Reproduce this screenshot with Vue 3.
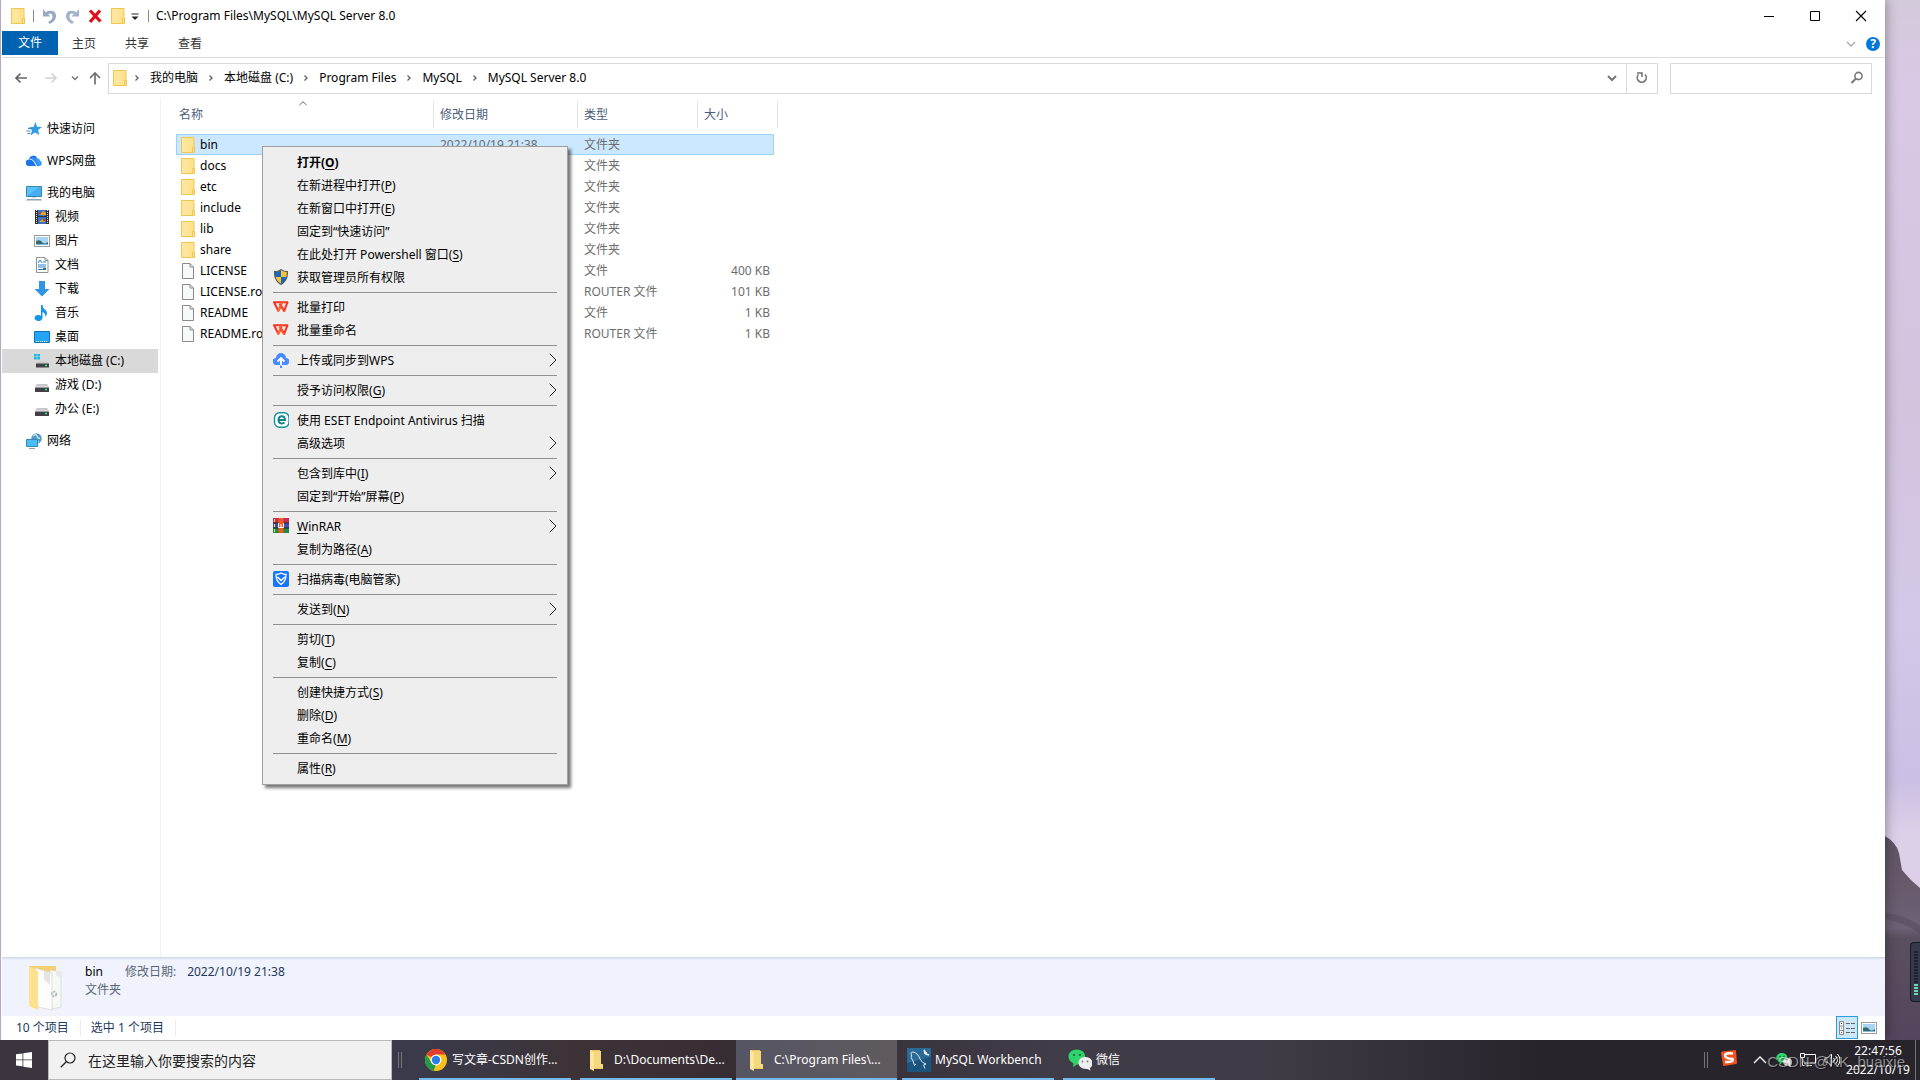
<script setup>
import { ref } from 'vue'

const folder = '<path d="M1.500 .5h12.500v15h-12.500z" fill="#ffe391" stroke="#eec650"/><path d="M2 1h6v14H2z" fill="#fff" opacity=".12"/><path d="M12.500 10.500h2v5h-2z" fill="#ffe391" stroke="#eec650"/>'
const page = '<path d="M2.500 .5h7.500l3.500 3.500v11.500h-11z" fill="#f8f9f9" stroke="#8a8a8a"/><path d="M10 .5V4h3.500" fill="none" stroke="#8a8a8a"/>'
const disk = '<path d="M3 7h10l2 3H1z" fill="#c7c9cc"/><rect x="1" y="10" width="14" height="5" rx=".5" fill="#3f4245"/><path d="M1 10h14" stroke="#eee"/><path d="M11 12.500h2" stroke="#52e07a" stroke-width="1.500"/>'
const picture = '<rect x=".5" y="2.500" width="15" height="11" fill="#fff" stroke="#9b9b9b"/><path d="M2 4h12v8H2z" fill="#a8d3f1"/><path d="M2 8q4-2 6 1t6 0v3H2z" fill="#356b68"/><path d="M2 11h12v1H2z" fill="#7fb8d8"/>'
const wps = '<path d="M1 3.200h13.500l-3.300 8.600-3-4.800-2.900 4.800z" fill="none" stroke="#f9302a" stroke-width="2" stroke-linejoin="round"/><path d="M5.300 11.800L9.200 3.200" stroke="#ff6a2b" stroke-width="2.200" stroke-linecap="round"/><path d="M7 5.500l4.200 6.300" stroke="#fb4a26" stroke-width="2.200" stroke-linecap="round"/>'

const icons = {
  folder,
  page,
  disk,
  picture,
  wps,
  star: '<path d="M9.500 1l1.500 4.800 5 .1-3.900 3.200 1.100 5-4.200-2.700-4.400 2.900 1.500-5-3.300-3 4.700-.4z" fill="#2f9be3"/><path d="M2 7.500h4M.5 10h4M1.500 12.500h3" stroke="#2f7fc3" stroke-width=".9"/>',
  cloud: '<path d="M3 6a4.500 4.500 0 0 1 7.500-2l3 8H5z" fill="#156bda"/><path d="M9 5.500a3.500 3.500 0 0 1 5 2A3 3 0 0 1 14 13h-2z" fill="#3b9bff"/><path d="M5 3q4 1 5 4l3 6H8z" fill="#2f8dfa"/><path d="M3.500 6.500q4 0 7 6.500H2.500a3 3 0 0 1 1-6.500z" fill="#1a76e8"/><path d="M3.500 6q4 0 7 7" fill="none" stroke="#fff" stroke-width="1"/>',
  pc: '<path d="M.5 1.500h15v10H.5z" fill="#5cc3f7" stroke="#3985ac"/><path d="M1 11L13 2h2v9z" fill="#46aef0"/><path d="M6 12h4v1H6z" fill="#ccd"/><path d="M1 14h14l1 1.500H0z" fill="#8ba4b5"/>',
  video: '<path d="M1 1h14v14H1z" fill="#303030"/><path d="M2.500 1v14M13.500 1v14" stroke="#ddd" stroke-dasharray="1 1"/><path d="M4 1h8v6H4zM4 8h8v7H4z" fill="#3c72c4"/><path d="M6 5l3-3 3 2v2H7zM5 13l4-3 2 3z" fill="#e9a328"/><path d="M5 3h2v2H5zM9 10h2v2H9z" fill="#c73827"/>',
  text: '<path d="M2.500 .5h8.500l3 3v12h-11.500z" fill="#fff" stroke="#929292"/><path d="M11 .5v3h3" fill="none" stroke="#929292"/><path d="M4 6l2-3 2 3M9 5h3M4 8h8M4 10h8M4 12.500h5" stroke="#2682c6" fill="none"/><path d="M9 11h3v2H9z" fill="#3a7b78"/>',
  down: '<path d="M5 0h6v8h4.500L8 15.500.5 8H5z" fill="#3295e4"/>',
  music: '<path d="M7 0h1.500q0 3 3 5 3 3 0 7 0-4-3-5v6a4 3 0 1 1-1.500-2.300z" fill="#1594ec"/>',
  desktop: '<path d="M.5 2.500h15v11H.5z" fill="#22a5f8" stroke="#0b73bd"/><path d="M2 12.500h12" stroke="#fff" stroke-dasharray="1 1"/>',
  system: '<path d="M0 1h2.700v2.500H0zM3.300 1H6v2.500H3.300zM0 4h2.700v2.500H0zM3.300 4H6v2.500H3.300z" fill="#18b5ee"/><path d="M4 8.500h9l2 2H2z" fill="#c7c9cc"/><rect x="2" y="10.500" width="13" height="4" fill="#3f4245"/><path d="M11 12.500h2" stroke="#52e07a" stroke-width="1.500"/>',
  network: '<circle cx="10.500" cy="5.500" r="5.200" fill="#5399be"/><path d="M7 3q3-3 4 0t3 2M9 8l4 1" fill="none" stroke="#bfe1ee" stroke-width="1.500"/><path d="M.5 6.500h11v7H.5z" fill="#4cbcf5" stroke="#3288b7"/><path d="M3 15.500h6" stroke="#8ba4b5"/>',
  shield: '<path d="M8 .6q3 2 6.400 2 .5 9-6.400 12.800Q1 11.500 1.600 2.600q3.400 0 6.400-2z" fill="#f7c237"/><path d="M8 1v7H2V3q3 0 6-2zM8 8h6q-1 4.500-6 7z" fill="#1769bf"/><path d="M8 .6q3 2 6.400 2 .5 9-6.400 12.800Q1 11.500 1.600 2.600q3.400 0 6.400-2z" fill="none" stroke="#4c5560" stroke-width="1.100"/>',
  upload: '<path d="M3.500 13a3.500 3.500 0 0 1-.5-7 5 5 0 0 1 10 0 3.500 3.500 0 0 1-.5 7z" fill="#478bff"/><path d="M8 14V7M4.500 9.500L8 6l3.500 3.500" fill="none" stroke="#fff" stroke-width="1.800"/><path d="M7 13.500h2V16H7z" fill="#478bff"/>',
  eset: '<rect x="1.500" y=".7" width="14.500" height="14.500" rx="5" fill="#fff" stroke="#12939a" stroke-width="1.400"/><path d="M6 8h6c0-5-6.500-5-6.500 0 0 4 4 4 6 2.500" fill="none" stroke="#12838c" stroke-width="2"/>',
  rar: '<path d="M0 0h16v5H0z" fill="#c72c57"/><path d="M0 5h16v5H0z" fill="#444fa8"/><path d="M0 10h16v5H0z" fill="#228c42"/><path d="M0 5h16M0 10h16" stroke="#222"/><path d="M5.500 0h5v15h-5z" fill="#ee5b22"/><path d="M5.500 5v4.500h5V5M8 6v3" fill="none" stroke="#fff"/><path d="M1.500 1v3M1.500 6v3M1.500 11v3" stroke="#f7df47"/>',
  guard: '<rect width="16" height="16" rx="2" fill="#1476ff"/><path d="M8 2q2.500 1.500 5 1.500 0 7-5 10-5-3-5-10 2.500 0 5-1.500z" fill="none" stroke="#fff" stroke-width="1.300"/><path d="M4.500 6L8 9.500 12 6" fill="none" stroke="#fff" stroke-width="1.500"/>',
  undo: '<path d="M2 1v7.500h7.500L7 6q4.500-1.500 4.500 2.500 0 3-4.500 5.500l2 2q7-4 6-9-1-5.500-8.500-4L5 4.500z" fill="#98a9c6"/>',
  redo: '<path d="M15 1v7.500H7.500L10 6Q5.500 4.500 5.500 8.500q0 3 4.500 5.500l-2 2q-7-4-6-9 1-5.500 8.500-4L12 4.500z" fill="#a3b2cb"/>',
  cross: '<path d="M3 2.500l10.500 11M13 2.500L3 14" stroke="#df1018" stroke-width="3.200"/>',
  menu: '<path d="M4.500 6h7" stroke="#222"/><path d="M4.500 8.500h7L8 12z" fill="#222"/>',
  back: '<path d="M14 8H3M7.500 3.500L3 8l4.500 4.500" fill="none" stroke="#666" stroke-width="1.700"/>',
  forward: '<path d="M2 8h11M8.500 3.500L13 8l-4.500 4.500" fill="none" stroke="#d3d3d3" stroke-width="1.700"/>',
  up: '<path d="M8 14.500V3M3 8l5-5 5 5" fill="none" stroke="#707070" stroke-width="1.700"/>',
  chevron: '<path d="M5 6.500L8 9.500l3-3" fill="none" stroke="#777" stroke-width="1.500"/>',
  wide: '<path d="M4 6l4 4 4-4" fill="none" stroke="#777" stroke-width="2"/>',
  thin: '<path d="M4 6l4 4 4-4" fill="none" stroke="#aaa" stroke-width="1.300"/>',
  crumb: '<path d="M6.500 5.500L9 8l-2.500 2.500" fill="none" stroke="#666" stroke-width="1.400"/>',
  refresh: '<path d="M4.500 4.500a4.500 4.500 0 1 0 6.500 0" fill="none" stroke="#707070" stroke-width="1.600"/><path d="M3 3h5v4" fill="none" stroke="#707070" stroke-width="1.500"/>',
  search: '<circle cx="9.500" cy="6" r="3.600" fill="none" stroke="#777" stroke-width="1.600"/><path d="M7 8.500L2.500 13" stroke="#777" stroke-width="2"/>',
  min: '<path d="M3 8.500h10" stroke="#000"/>',
  max: '<path d="M3.500 3.500h9v9h-9z" fill="none" stroke="#000"/>',
  close: '<path d="M3 3l10 10M13 3L3 13" stroke="#000" stroke-width="1.100"/>',
}

const quick = ['undo', 'redo', 'cross', 'folder', 'menu']
const tabs = ['主页', '共享', '查看']
const crumbs = ['我的电脑', '本地磁盘 (C:)', 'Program Files', 'MySQL', 'MySQL Server 8.0']

const nav = [
  [{ icon: 'star', name: '快速访问' }],
  [{ icon: 'cloud', name: 'WPS网盘' }],
  [
    { icon: 'pc', name: '我的电脑' },
    { icon: 'video', name: '视频', child: true },
    { icon: 'picture', name: '图片', child: true },
    { icon: 'text', name: '文档', child: true },
    { icon: 'down', name: '下载', child: true },
    { icon: 'music', name: '音乐', child: true },
    { icon: 'desktop', name: '桌面', child: true },
    { icon: 'system', name: '本地磁盘 (C:)', child: true, current: true },
    { icon: 'disk', name: '游戏 (D:)', child: true },
    { icon: 'disk', name: '办公 (E:)', child: true },
  ],
  [{ icon: 'network', name: '网络' }],
]

const date = '2022/10/19 21:38'
const files = [
  ...['bin', 'docs', 'etc', 'include', 'lib', 'share'].map((name) => ({ name, icon: 'folder', type: '文件夹', size: '' })),
  { name: 'LICENSE', icon: 'page', type: '文件', size: '400 KB' },
  { name: 'LICENSE.router', icon: 'page', type: 'ROUTER 文件', size: '101 KB' },
  { name: 'README', icon: 'page', type: '文件', size: '1 KB' },
  { name: 'README.router', icon: 'page', type: 'ROUTER 文件', size: '1 KB' },
]
const selected = ref('bin')

const menu = [
  [
    { t: '打开', k: 'O', bold: true },
    { t: '在新进程中打开', k: 'P' },
    { t: '在新窗口中打开', k: 'E' },
    { t: '固定到“快速访问”' },
    { t: '在此处打开 Powershell 窗口', k: 'S' },
    { t: '获取管理员所有权限', icon: 'shield' },
  ],
  [
    { t: '批量打印', icon: 'wps' },
    { t: '批量重命名', icon: 'wps' },
  ],
  [{ t: '上传或同步到WPS', icon: 'upload', sub: true }],
  [{ t: '授予访问权限', k: 'G', sub: true }],
  [
    { t: '使用 ESET Endpoint Antivirus 扫描', icon: 'eset' },
    { t: '高级选项', sub: true },
  ],
  [
    { t: '包含到库中', k: 'I', sub: true },
    { t: '固定到“开始”屏幕', k: 'P' },
  ],
  [
    { lead: 'W', t: 'inRAR', icon: 'rar', sub: true },
    { t: '复制为路径', k: 'A' },
  ],
  [{ t: '扫描病毒(电脑管家)', icon: 'guard' }],
  [{ t: '发送到', k: 'N', sub: true }],
  [
    { t: '剪切', k: 'T' },
    { t: '复制', k: 'C' },
  ],
  [
    { t: '创建快捷方式', k: 'S' },
    { t: '删除', k: 'D' },
    { t: '重命名', k: 'M' },
  ],
  [{ t: '属性', k: 'R' }],
]
</script>

<template>
  <div class="desktop">
    <div class="workspace">
      <main class="window">
        <header class="titlebar">
          <svg class="ico" viewBox="0 0 16 16" v-html="icons.folder"></svg>
          <i class="bar"></i>
          <div class="quick">
            <button v-for="q in quick" :key="q" :class="q" :aria-label="q"><svg class="ico" viewBox="0 0 16 16" v-html="icons[q]"></svg></button>
          </div>
          <i class="bar"></i>
          <span class="title">C:\Program Files\MySQL\MySQL Server 8.0</span>
          <div class="winbtns">
            <button v-for="b in ['min', 'max', 'close']" :key="b" :aria-label="b"><svg class="ico" viewBox="0 0 16 16" v-html="icons[b]"></svg></button>
          </div>
        </header>

        <nav class="ribbon">
          <button class="file">文件</button>
          <button v-for="t in tabs" :key="t">{{ t }}</button>
          <div class="ribbon-end">
            <svg class="ico" viewBox="0 0 16 16" v-html="icons.thin"></svg>
            <button class="help" aria-label="帮助">?</button>
          </div>
        </nav>

        <div class="addressrow">
          <div class="arrows">
            <button aria-label="后退"><svg class="ico" viewBox="0 0 16 16" v-html="icons.back"></svg></button>
            <button aria-label="前进"><svg class="ico" viewBox="0 0 16 16" v-html="icons.forward"></svg></button>
            <button class="slim" aria-label="最近"><svg class="ico" viewBox="0 0 16 16" v-html="icons.chevron"></svg></button>
            <button class="slim" aria-label="上移"><svg class="ico" viewBox="0 0 16 16" v-html="icons.up"></svg></button>
          </div>
          <div class="address">
            <svg class="ico" viewBox="0 0 16 16" v-html="icons.folder"></svg>
            <template v-for="c in crumbs" :key="c">
              <svg class="sepchev" viewBox="0 0 16 16" v-html="icons.crumb"></svg>
              <button>{{ c }}</button>
            </template>
            <button class="drop" aria-label="历史"><svg class="ico" viewBox="0 0 16 16" v-html="icons.wide"></svg></button>
            <button class="refresh" aria-label="刷新"><svg class="ico" viewBox="0 0 16 16" v-html="icons.refresh"></svg></button>
          </div>
          <label class="search">
            <input type="text" aria-label="搜索" />
            <svg class="ico" viewBox="0 0 16 16" v-html="icons.search"></svg>
          </label>
        </div>

        <div class="content">
          <aside class="sidebar">
            <div v-for="(g, i) in nav" :key="i" class="group">
              <a v-for="n in g" :key="n.name" href="#" :class="{ child: n.child, current: n.current }">
                <svg class="ico" viewBox="0 0 16 16" v-html="icons[n.icon]"></svg>{{ n.name }}
              </a>
            </div>
          </aside>

          <section class="listing">
            <svg class="sort" viewBox="0 0 8 5"><path d="M.5 4L4 .7 7.500 4" fill="none" stroke="#666" /></svg>
            <table>
              <colgroup><col class="c-name" /><col class="c-date" /><col class="c-type" /><col class="c-size" /></colgroup>
              <thead>
                <tr>
                  <th v-for="h in ['名称', '修改日期', '类型', '大小']" :key="h" scope="col"><div>{{ h }}</div></th>
                </tr>
              </thead>
              <tbody>
                <tr v-for="f in files" :key="f.name" :class="{ selected: f.name === selected }" @click="selected = f.name">
                  <td class="name"><div><svg class="ico" viewBox="0 0 16 16" v-html="icons[f.icon]"></svg>{{ f.name }}</div></td>
                  <td>{{ date }}</td>
                  <td>{{ f.type }}</td>
                  <td class="size">{{ f.size }}</td>
                </tr>
              </tbody>
            </table>
          </section>
        </div>

        <section class="details">
          <svg class="bigfolder" viewBox="0 0 36 46">
            <path d="M1 1h27v38H1z" fill="#f3cf72" />
            <path d="M22 5l11 2v35l-9 2z" fill="#f7f7f6" stroke="#d5d5d5" stroke-width=".7" />
            <path d="M28 5v5l5 3V7z" fill="#e9e9e7" />
            <path d="M7 3l17 5v37L10 42z" fill="#fdfdfb" stroke="#d9d7d0" stroke-width=".7" />
            <path d="M16 6v8l6 6V8z" fill="#e4e4e2" />
            <circle cx="26" cy="29" r="2.300" fill="none" stroke="#aeb9c2" stroke-width="1.800" stroke-dasharray="2 1" />
            <path d="M1 1l9 5v39l-9-4z" fill="#ffe08e" />
          </svg>
          <div class="facts">
            <div><span class="fname">bin</span><span class="label">修改日期:</span><span>{{ date }}</span></div>
            <div class="label">文件夹</div>
          </div>
        </section>

        <footer class="status">
          <span>10 个项目</span>
          <span>选中 1 个项目</span>
          <div class="views">
            <button class="on" aria-label="详细信息">
              <svg viewBox="0 0 18 16"><path d="M1.500 1.500h4v13h-4zM1.500 6h4M1.500 10.500h4" fill="#fff" stroke="#8a8a8a" /><path d="M3 3.500h1" stroke="#333" /><path d="M3 8h1" stroke="#2b80c8" /><path d="M3 12.500h1" stroke="#c33" /><path d="M8 3.500h4M13 3.500h4M8 8.500h4M13 8.500h4M8 12.500h4M13 12.500h4" stroke="#666" /></svg>
            </button>
            <button class="large" aria-label="大图标"><svg class="ico" viewBox="0 0 16 16" v-html="icons.picture"></svg></button>
          </div>
        </footer>
      </main>

      <div class="wallpaper">
        <svg viewBox="0 0 35 220" preserveAspectRatio="none">
          <defs>
            <linearGradient id="rock" x1="0" y1="0" x2="0" y2="1">
              <stop offset="0" stop-color="#5f5464" />
              <stop offset=".45" stop-color="#6d6175" />
              <stop offset=".5" stop-color="#5a5060" />
              <stop offset="1" stop-color="#54455c" />
            </linearGradient>
          </defs>
          <path d="M0 16Q11 22 14 33l3 17q8 10 18 18v152H0z" fill="url(#rock)" />
          <path d="M0 93q18 1 35 13v8Q20 102 0 99z" fill="#4a4150" opacity=".35" />
        </svg>
        <div class="meter"><i></i></div>
      </div>
    </div>

    <div class="taskbar">
      <button class="start" aria-label="开始">
        <svg viewBox="0 0 16 16"><path d="M0 2.300l6.500-.9v6H0zM7.300 1.300L16 0v7.400H7.300zM0 8.300h6.500v6L0 13.500zM7.300 8.300H16V16l-8.700-1.300z" fill="#fff" /></svg>
      </button>
      <label class="tasksearch">
        <svg viewBox="0 0 16 16"><circle cx="10" cy="6" r="5" fill="none" stroke="#222" stroke-width="1.200" /><path d="M6.500 9.500L.8 15.200" stroke="#222" stroke-width="1.300" /></svg>
        <input type="text" placeholder="在这里输入你要搜索的内容" />
      </label>
      <i class="grip"></i>
      <div class="tasks">
        <button>
          <svg class="app" viewBox="0 0 24 24">
            <circle cx="12" cy="12" r="11" fill="#fbc116" />
            <path d="M12 12L2.500 6.500A11 11 0 0 1 21.500 6.500H12z" fill="#e33b2e" />
            <path d="M2.500 6.500L7.500 15l4.500 2-2.500 5.800A11 11 0 0 1 2.500 6.500z" fill="#229a4b" />
            <circle cx="12" cy="12" r="5.400" fill="#fff" /><circle cx="12" cy="12" r="4.200" fill="#2b7de9" />
          </svg>写文章-CSDN创作...
        </button>
        <button class="dir">
          <svg class="app" viewBox="0 0 24 24"><path d="M5 2h10v13l3 2v4H7z" fill="#edc860" /><path d="M5 2l4 2v19l-4-2z" fill="#ffe69b" /><path d="M9 3h7v13h2v4H9z" fill="#f5d77d" /></svg>D:\Documents\De...
        </button>
        <button class="dir active">
          <svg class="app" viewBox="0 0 24 24"><path d="M5 2h10v13l3 2v4H7z" fill="#edc860" /><path d="M5 2l4 2v19l-4-2z" fill="#ffe69b" /><path d="M9 3h7v13h2v4H9z" fill="#f5d77d" /></svg>C:\Program Files\...
        </button>
        <button>
          <svg class="app" viewBox="0 0 24 24"><rect width="24" height="24" rx="1" fill="#1c5480" /><path d="M0 0h24v9L0 15z" fill="#2a6b98" /><path d="M6 13q-3-4-1.500-6Q3 4 6 4q5 1 7 7 2 4 6 5l-2.500 1 1.500 3.500M6 13l1.500 4.500L9 16" fill="none" stroke="#dce8f1" /><path d="M17 2l2 4 3 1M20 5l-3 0" fill="none" stroke="#e9eef2" stroke-width="1.800" /></svg>MySQL Workbench
        </button>
        <button>
          <svg class="app" viewBox="0 0 24 24"><path d="M9 1.500c11 0 11 15 0 15l-4 2.500.5-3.500C-3 11 0 1.500 9 1.500z" fill="#2fd36b" /><circle cx="6" cy="7" r="1.100" fill="#17643a" /><circle cx="12" cy="7" r="1.100" fill="#17643a" /><path d="M17 9c9 0 9 9 5 11l.5 2.500-3-1.500C8 22 8 9 17 9z" fill="#eee" /><circle cx="14.500" cy="13.500" r=".9" fill="#777" /><circle cx="19.500" cy="13.500" r=".9" fill="#777" /></svg>微信
        </button>
      </div>
      <div class="tray">
        <i class="grip"></i>
        <svg class="sogou" viewBox="0 0 16 16"><path d="M1 1.500L14 0q1 0 1 1l1 12q0 1-1 1L3 16q-1 0-1-1L0 3q0-1 1-1.500z" fill="#f4511e" /><path d="M12 3.500Q4 2.500 4 5.500T11.500 9Q13 12.500 4 12" fill="none" stroke="#fff" stroke-width="2.400" /></svg>
        <svg viewBox="0 0 16 16"><path d="M2 11l6-6 6 6" fill="none" stroke="#fff" stroke-width="1.400" /></svg>
        <svg viewBox="0 0 24 24"><path d="M9 1.500c11 0 11 15 0 15l-4 2.500.5-3.500C-3 11 0 1.500 9 1.500z" fill="#2fd36b" /><path d="M17 9c9 0 9 9 5 11l.5 2.500-3-1.500C8 22 8 9 17 9z" fill="#eee" /><circle cx="6" cy="7" r="1.200" fill="#17643a" /><circle cx="12" cy="7" r="1.200" fill="#17643a" /></svg>
        <svg viewBox="0 0 16 16"><path d="M5 2.500h10.500v8.500H4M7 13.500h5M.5 1.500h4v4h-4zM2.500 5.500v8h2" fill="none" stroke="#fff" /></svg>
        <svg viewBox="0 0 16 16"><path d="M1 6h2.500L7.500 2v12l-4-4H1z" fill="none" stroke="#fff" /><path d="M9.500 6q2 2 0 4M11.500 4q4 4 0 8M13.500 2q5 6 0 12" fill="none" stroke="#fff" /></svg>
        <div class="clock"><span>22:47:56</span><span>2022/10/19</span></div>
      </div>
      <span class="watermark">CSDN @KK_buaixie</span>
    </div>

    <ul class="context" role="menu">
      <li v-for="(g, i) in menu" :key="i" role="none">
        <button v-for="m in g" :key="m.t" role="menuitem" :class="{ bold: m.bold }">
          <svg class="ico" viewBox="0 0 16 16" v-html="m.icon ? icons[m.icon] : ''"></svg>
          <span><u v-if="m.lead">{{ m.lead }}</u>{{ m.t }}<template v-if="m.k">(<u>{{ m.k }}</u>)</template></span>
          <svg v-if="m.sub" class="more" viewBox="0 0 8 14"><path d="M.7 .7L7 7 .7 13.300" fill="none" stroke="#222" /></svg>
        </button>
      </li>
    </ul>
  </div>
</template>

<style>
body {
  margin: 0;
}
</style>

<style scoped>
* {
  box-sizing: border-box;
}
.desktop {
  position: relative;
  display: flex;
  flex-direction: column;
  min-height: 100vh;
  overflow: hidden;
  font: 12px/16px "Noto Sans", "Noto Sans CJK SC", sans-serif;
  color: #000;
}
button,
input {
  border: 0;
  padding: 0;
  margin: 0;
  background: none;
  font: inherit;
  color: inherit;
}
button {
  display: flex;
  align-items: center;
  justify-content: center;
  white-space: nowrap;
}
svg {
  display: block;
  flex: none;
}
.ico {
  width: 16px;
  height: 16px;
}
.workspace {
  flex: 1;
  display: flex;
}
.window {
  flex: 1;
  min-width: 0;
  display: flex;
  flex-direction: column;
  background: #fff;
  border-left: 1px solid #b7a9bd;
  padding-left: 1px;
  position: relative;
  z-index: 1;
  box-shadow: 0 0 12px #0006;
}

.titlebar {
  height: 31px;
  display: flex;
  align-items: center;
  padding-left: 8px;
}
.titlebar > .bar {
  width: 1px;
  height: 12px;
  background: #8c8c8c;
  margin: 0 7px;
}
.titlebar > .quick + .bar {
  margin: 0 7px 0 5px;
}
.quick {
  display: flex;
  gap: 7px;
}
.quick .menu {
  margin-left: -6px;
}
.title {
  white-space: nowrap;
}
.winbtns {
  margin-left: auto;
  padding-right: 1px;
  display: flex;
}
.winbtns button {
  width: 46px;
  height: 30px;
}

.ribbon {
  height: 27px;
  display: flex;
  align-items: flex-start;
  border-bottom: 1px solid #dadbdc;
  color: #333;
}
.ribbon > button {
  height: 24px;
  padding: 1px 14px 0;
  margin-right: 1px;
}
.ribbon > .file {
  padding: 0 16px;
  margin: 0;
  background: #0063b1;
  color: #fff;
}
.ribbon-end {
  margin: 5px 5px 0 auto;
  display: flex;
  align-items: center;
  gap: 7px;
}
.help {
  width: 14px;
  height: 14px;
  border-radius: 50%;
  background: #0078d7;
  color: #fff;
  font-weight: 700;
}

.addressrow {
  height: 40px;
  display: flex;
  align-items: center;
  padding: 0 13px 0 11px;
}
.arrows {
  width: 95px;
  display: flex;
  gap: 14px;
}
.arrows .slim {
  margin-left: -6px;
}
.arrows .slim + .slim {
  margin-left: -10px;
}
.address {
  flex: 1;
  display: flex;
  align-items: center;
  height: 31px;
  border: 1px solid #d9d9d9;
  padding-left: 3px;
}
.sepchev {
  width: 16px;
  height: 16px;
  margin: 0 5px;
}
.address > .ico + .sepchev {
  margin-left: 1px;
}
.drop {
  margin-left: auto;
  width: 28px;
}
.refresh {
  width: 31px;
  height: 29px;
  border-left: 1px solid #d9d9d9;
}
.search {
  width: 202px;
  height: 31px;
  margin-left: 12px;
  border: 1px solid #d9d9d9;
  display: flex;
  align-items: center;
  padding-right: 6px;
}
.search input {
  flex: 1;
  min-width: 0;
  outline: 0;
}

.content {
  flex: 1;
  display: flex;
}
.sidebar {
  width: 159px;
  padding-top: 19px;
  border-right: 1px solid #f2f2f2;
}
.group {
  margin-bottom: 8px;
}
.sidebar a {
  display: flex;
  align-items: center;
  gap: 5px;
  width: 156px;
  height: 24px;
  padding-left: 24px;
  color: #000;
  text-decoration: none;
  white-space: nowrap;
}
.sidebar a.child {
  padding-left: 32px;
}
.sidebar a.current {
  background: #d9d9d9;
}

.listing {
  position: relative;
  padding: 3px 0 0 15px;
}
.sort {
  position: absolute;
  left: 138px;
  top: 3px;
  width: 8px;
  height: 5px;
}
table {
  width: 598px;
  table-layout: fixed;
  border-collapse: separate;
  border-spacing: 0;
  color: #6d6d6d;
}
.c-name {
  width: 258px;
}
.c-date {
  width: 144px;
}
.c-type {
  width: 120px;
}
th {
  padding: 0 0 6px;
  font-weight: 400;
  text-align: left;
  color: #4c607a;
}
th div {
  height: 27px;
  line-height: 27px;
  border-right: 1px solid #e5e5e5;
  padding-left: 6px;
}
th:first-child div {
  padding-left: 3px;
}
th:last-child div {
  margin-right: -4px;
}
td {
  height: 21px;
  padding: 0 0 0 6px;
  white-space: nowrap;
}
.name {
  padding-left: 4px;
  color: #000;
}
.name div {
  display: flex;
  align-items: center;
  gap: 4px;
}
.size {
  text-align: right;
  padding-right: 4px;
}
.selected {
  background: #cce8ff;
  outline: 1px solid #99d1ff;
  outline-offset: -1px;
}

.details {
  height: 59px;
  display: flex;
  padding: 6px 0 0 26px;
  background: linear-gradient(#c9d7ea, #f0f3fb 3px);
  color: #1e395b;
}
.bigfolder {
  width: 36px;
  height: 46px;
  margin: 2px 21px 0 0;
}
.facts > div {
  line-height: 18px;
  white-space: nowrap;
}
.facts span {
  margin-right: 11px;
}
.facts .fname {
  color: #000;
  margin-right: 22px;
}
.facts .label {
  color: #5a6779;
}
.status {
  height: 24px;
  display: flex;
  align-items: center;
  padding: 0 8px 0 14px;
  color: #1e395b;
}
.status > span {
  padding-right: 11px;
  margin-right: 10px;
  border-right: 1px solid #ececec;
}
.views {
  margin: 0 0 1px auto;
  display: flex;
  gap: 3px;
}
.views button {
  height: 23px;
}
.views .large {
  width: 16px;
}
.views .on {
  width: 22px;
  background: #cce8f6;
  border: 1px solid #26a0da;
}
.views .on svg {
  width: 18px;
  height: 16px;
}

.wallpaper {
  width: 35px;
  display: flex;
  flex-direction: column;
  justify-content: flex-end;
  position: relative;
  background: linear-gradient(#d3cadb, #d9c9e4 8%, #d3c4de 40%, #d3c8e8 60%, #cbbfe3 75%, #dccfe8 80%);
}
.wallpaper > svg {
  width: 35px;
  height: 220px;
}
.meter {
  position: absolute;
  right: 0;
  bottom: 38px;
  width: 10px;
  height: 60px;
  padding: 7px 2px 6px 3px;
  background: #353b4d;
  border: 1px solid #151923;
  border-right: 0;
  border-radius: 4px 0 0 4px;
}
.meter i {
  display: block;
  height: 100%;
  background: repeating-linear-gradient(#353b4d 0 1px, transparent 1px 3px), linear-gradient(#1d222e 76%, #6fd8b5 76%);
}

.taskbar {
  position: relative;
  z-index: 2;
  height: 40px;
  display: flex;
  color: #fff;
  background: linear-gradient(90deg, #3c343e, #3b3a4b 22%, #3d3337 30%, #352c33 40%, #403c48 55%, #403c46 66%, #28242c 80%, #28242c);
}
.start {
  width: 48px;
}
.start svg {
  width: 16px;
  height: 16px;
}
.tasksearch {
  width: 344px;
  display: flex;
  align-items: center;
  gap: 12px;
  padding-left: 11px;
  background: #f1f1f1;
  border: 1px solid #b9b9b9;
  color: #222;
}
.tasksearch svg {
  width: 16px;
  height: 16px;
}
.tasksearch input {
  flex: 1;
  min-width: 0;
  outline: 0;
  padding-top: 2px;
  font-size: 14px;
}
.tasksearch input::placeholder {
  color: #222;
  opacity: 1;
}
.grip {
  width: 4px;
  height: 16px;
  margin: 12px 6px;
  border: solid #77737a;
  border-width: 0 1px;
}
.tasks {
  display: flex;
  gap: 9px;
  margin-left: 11px;
}
.tasks button {
  width: 152px;
  height: 40px;
  padding: 2px 4px 0 5px;
  gap: 4px;
  justify-content: flex-start;
  border-bottom: 2px solid #76b9ed;
}
.tasks .dir {
  gap: 5px;
}
.tasks .active {
  width: 161px;
  margin: 0 -4px 0 -5px;
  padding-left: 9px;
  background: linear-gradient(90deg, #555563, #605a5f);
}
.app {
  width: 24px;
  height: 24px;
}
.tray {
  margin-left: auto;
  display: flex;
  align-items: center;
  gap: 8px;
  padding-right: 4px;
}
.tray .grip {
  margin: 0 5px 0 0;
}
.tray svg {
  width: 16px;
  height: 16px;
}
.tray .sogou {
  margin: 0 7px 4px 0;
}
.clock {
  width: 68px;
  height: 40px;
  display: flex;
  flex-direction: column;
  align-items: center;
  justify-content: center;
  line-height: 19px;
  border-right: 1px solid #77737a;
  padding-right: 7px;
  white-space: nowrap;
}
.watermark {
  position: absolute;
  right: 15px;
  top: 12px;
  font: 15px/20px "Liberation Sans", "Noto Sans CJK SC", sans-serif;
  color: #ffffff80;
  text-shadow: 1px 1px 1px #0008;
  white-space: nowrap;
}

.context {
  position: absolute;
  z-index: 3;
  left: 262px;
  top: 146px;
  width: 306px;
  margin: 0;
  padding: 4px 10px;
  list-style: none;
  background: #eee;
  border: 1px solid #a0a0a0;
  box-shadow: 3px 3px 3px #0008;
}
.context li + li {
  margin-top: 3px;
  padding-top: 3px;
  border-top: 1px solid #919191;
}
.context button {
  width: 100%;
  height: 23px;
  gap: 8px;
  justify-content: flex-start;
}
.context .bold {
  font-weight: 700;
}
.context u {
  text-underline-offset: 2px;
}
.context .ico {
  margin-bottom: 2px;
}
.more {
  width: 8px;
  height: 14px;
  margin: 0 0 2px auto;
}
</style>
